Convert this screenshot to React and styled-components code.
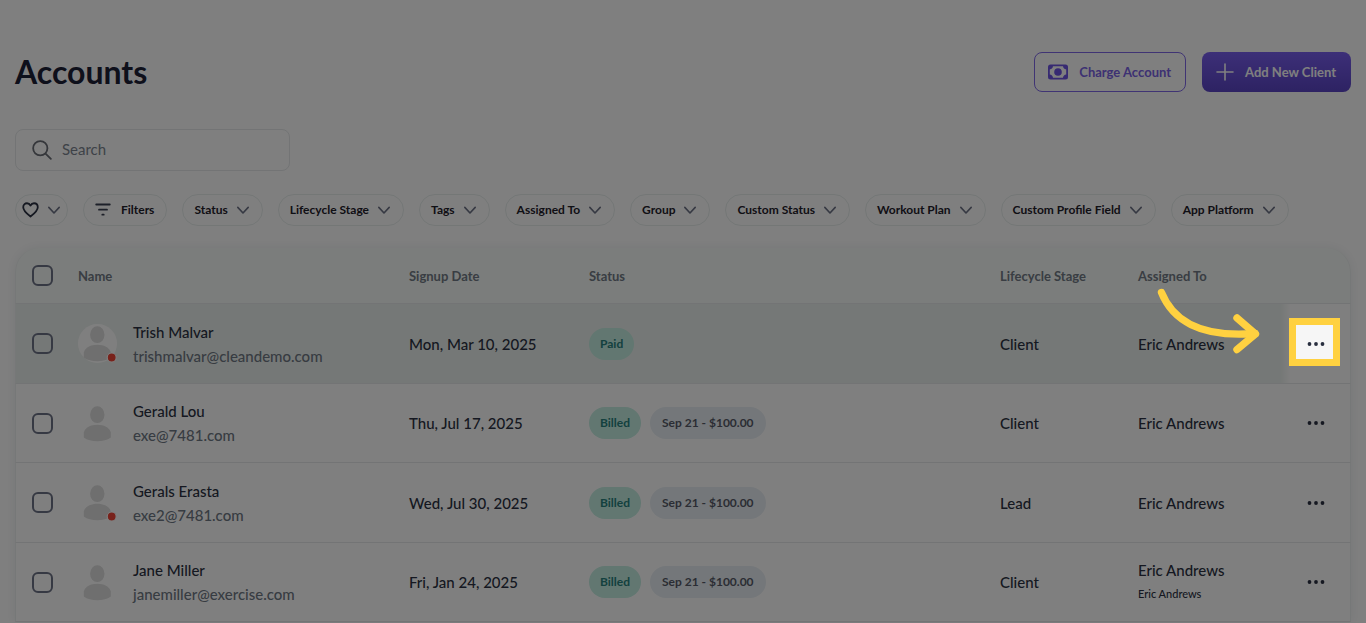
import React, { useState } from "react";
import styled, { createGlobalStyle, css } from "styled-components";

const GlobalStyle = createGlobalStyle`
  * {
    box-sizing: border-box;
  }
  body {
    margin: 0;
    background: #ffffff;
    color: #2b3142;
    font-family: Lato, "Liberation Sans", sans-serif;
    overflow: hidden;
  }
  button,
  input {
    font-family: inherit;
  }
`;

// --- STYLED COMPONENTS ---
const Page = styled.main`
  min-height: 100vh;
  padding: 52px 15px 0;
`;

const Header = styled.header`
  display: flex;
  align-items: center;
  justify-content: space-between;
  height: 40px;
`;

const Title = styled.h1`
  margin: 0;
  font-size: 32px;
  line-height: 40px;
  font-weight: 700;
  color: #1c2036;
`;

const HeaderActions = styled.div`
  display: flex;
  gap: 16px;
`;

const HeaderButton = styled.button`
  display: inline-flex;
  align-items: center;
  justify-content: center;
  gap: 10px;
  height: 40px;
  padding: 0 14px 0 12px;
  border: 1px solid #8069e8;
  border-radius: 8px;
  font-size: 13px;
  font-weight: 700;
  color: #7a62e6;
  background: transparent;
  cursor: pointer;
  ${({ $primary }) =>
    $primary &&
    css`
      border-color: transparent;
      color: #ffffff;
      background: linear-gradient(#7a5ff0, #5b45c6) border-box;
    `}
`;

const SearchBox = styled.label`
  display: flex;
  align-items: center;
  gap: 10px;
  width: 275px;
  height: 42px;
  margin-top: 37px;
  padding: 0 16px;
  border: 1px solid #e6e8ea;
  border-radius: 8px;
  color: #6b6e76;
`;

const SearchInput = styled.input`
  flex: 1;
  min-width: 0;
  padding: 0 0 2px;
  border: 0;
  outline: 0;
  background: transparent;
  font-size: 15px;
  color: #2b3142;
  &::placeholder {
    color: #7c8590;
    opacity: 1;
  }
`;

const FilterBar = styled.div`
  display: flex;
  gap: 15px;
  margin-top: 23px;
`;

const FilterPill = styled.button`
  display: inline-flex;
  align-items: center;
  gap: ${({ $gap }) => $gap || 8}px;
  height: 32px;
  padding: 0 ${({ $pad }) => $pad || 12}px 2px ${({ $pad }) => $pad || 11}px;
  border: 1px solid #e8eeed;
  border-radius: 16px;
  background: #ffffff;
  font-size: 12px;
  font-weight: 700;
  color: #1f212b;
  white-space: nowrap;
  cursor: pointer;
`;

const Card = styled.section`
  margin-top: 22px;
  border-radius: 24px 24px 0 0;
  box-shadow: 0 0 12px rgba(30, 50, 60, 0.08);
`;

const Table = styled.table`
  width: 100%;
  border-collapse: separate;
  border-spacing: 0;
  table-layout: fixed;
  th,
  td {
    padding: 0;
    text-align: left;
    border-bottom: 1px solid #e6e9eb;
  }
  th {
    height: 56px;
    background: #f6faf8;
    font-size: 13px;
    font-weight: 700;
    color: #737b86;
  }
  th:first-child {
    border-top-left-radius: 24px;
  }
  th:last-child {
    border-top-right-radius: 24px;
  }
  td {
    height: 80px;
    font-size: 15px;
    font-weight: 500;
  }
  tbody tr:nth-child(even) td {
    height: 79px;
  }
  th:first-child,
  td:first-child {
    padding-left: 16px;
    border-left: 1px solid #edf0f0;
  }
  th:last-child,
  td:last-child {
    border-right: 1px solid #edf0f0;
  }
`;

const Col = styled.col`
  width: ${({ $width }) => ($width ? `${$width}px` : "auto")};
`;

const Row = styled.tr`
  td {
    background: ${({ $active }) => ($active ? "#ebf1ee" : "#ffffff")};
  }
  td:last-child {
    background: ${({ $active }) =>
      $active ? "linear-gradient(90deg, #ebf1ee, #ffffff 10px)" : "#ffffff"};
  }
`;

const Checkbox = styled.input`
  display: block;
  appearance: none;
  width: 21px;
  height: 21px;
  margin: 0;
  border: 2px solid #6d7286;
  border-radius: 6px;
  cursor: pointer;
  &:checked {
    background: #6d7286;
  }
`;

const Person = styled.div`
  display: flex;
  align-items: center;
  gap: 16px;
`;

const Avatar = styled.svg`
  display: block;
  flex: none;
`;

const Name = styled.div`
  line-height: 24px;
`;

const Email = styled.div`
  line-height: 24px;
  color: #6f7884;
`;

const SubText = styled.div`
  font-size: 11px;
  line-height: 24px;
`;

const Badges = styled.div`
  display: flex;
  gap: 9px;
`;

const Badge = styled.span`
  height: 32px;
  padding: 0 ${({ $neutral }) => ($neutral ? 12 : 11)}px;
  border-radius: 16px;
  font-size: 12px;
  line-height: 31px;
  font-weight: 700;
  color: ${({ $neutral }) => ($neutral ? "#575b69" : "#28827e")};
  background: ${({ $neutral }) => ($neutral ? "#e9eff4" : "#c4eee2")};
`;

const MenuCell = styled.div`
  position: relative;
  display: flex;
  justify-content: center;
`;

const MenuButton = styled.button`
  display: flex;
  align-items: center;
  justify-content: center;
  width: 36px;
  height: 36px;
  padding: 0;
  border: 0;
  background: transparent;
  color: #2b3142;
  cursor: pointer;
`;

// Tour step: yellow frame, everything outside of it is dimmed
const Spotlight = styled.div`
  position: absolute;
  z-index: 10;
  top: -8px;
  left: 8px;
  width: 51px;
  height: 48px;
  border: 7px solid #ffd140;
  background: rgba(0, 0, 0, 0.035);
  box-shadow: 0 0 0 3000px rgba(0, 0, 0, 0.5);
  pointer-events: none;
`;

const Arrow = styled.svg`
  position: absolute;
  z-index: 11;
  top: -42px;
  right: 86px;
  pointer-events: none;
`;

// --- ICONS ---
const Chevron = () => (
  <svg width="14" height="14" viewBox="0 0 14 14" fill="none" stroke="#6d7286" strokeWidth="1.6" strokeLinecap="round" strokeLinejoin="round" aria-hidden="true">
    <path d="M1.8 5.4L7 11l5.2-5.6" />
  </svg>
);

const SearchIcon = () => (
  <svg width="20" height="20" viewBox="0 0 21 21" fill="none" stroke="currentColor" strokeWidth="1.9" strokeLinecap="round" aria-hidden="true">
    <circle cx="8.7" cy="8.7" r="7.5" />
    <path d="M14.2 14.2l5.6 5.6" />
  </svg>
);

const HeartIcon = () => (
  <svg width="17" height="17" viewBox="0 0 18 18" fill="none" stroke="#2b3142" strokeWidth="1.9" strokeLinejoin="round" aria-hidden="true">
    <path d="M9 16.5C5 13.5 1.3 10.3 1.3 6.7C1.3 4.1 3.1 2.4 5.3 2.4C7 2.4 8.3 3.4 9 4.8C9.7 3.4 11 2.4 12.7 2.4C14.9 2.4 16.7 4.1 16.7 6.7C16.7 10.3 13 13.5 9 16.5Z" />
  </svg>
);

const FilterIcon = () => (
  <svg width="16" height="14" viewBox="0 0 16 14" fill="none" stroke="#3b4152" strokeWidth="1.8" strokeLinecap="round" aria-hidden="true">
    <path d="M1.2 2.5h13.6M4 7.7h8M7.3 12.7h1.4" />
  </svg>
);

const CashIcon = () => (
  <svg width="22" height="22" viewBox="0 0 22 22" fill="#6e55e4" aria-hidden="true">
    <path
      fillRule="evenodd"
      d="M3.5 3.5H18.5A2.5 2.5 0 0 1 21 6V16A2.5 2.5 0 0 1 18.5 18.5H3.5A2.5 2.5 0 0 1 1 16V6A2.5 2.5 0 0 1 3.5 3.5ZM6 5.3C5.8 7 4.5 8.3 2.8 8.5V13.5C4.5 13.7 5.8 15 6 16.7H16C16.2 15 17.5 13.7 19.2 13.5V8.5C17.5 8.3 16.2 7 16 5.3Z"
    />
    <circle cx="11" cy="11" r="3.8" />
  </svg>
);

const PlusIcon = () => (
  <svg width="20" height="20" viewBox="0 0 20 20" fill="none" stroke="currentColor" strokeWidth="1.6" strokeLinecap="round" aria-hidden="true">
    <path d="M10 2v16M2 10h16" />
  </svg>
);

const DotsIcon = () => (
  <svg width="20" height="6" viewBox="0 0 20 6" fill="currentColor" aria-hidden="true">
    <circle cx="3.5" cy="3" r="1.9" />
    <circle cx="10" cy="3" r="1.9" />
    <circle cx="16.5" cy="3" r="1.9" />
  </svg>
);

const UserAvatar = ({ alert }) => (
  <Avatar width="39" height="39" viewBox="0 0 39 39" aria-hidden="true">
    <circle cx="19.5" cy="19.5" r="19.5" fill="#ffffff" />
    <ellipse cx="19.3" cy="10.7" rx="7.2" ry="8.4" fill="#dedede" />
    <path d="M5.8 28.5C7 23.5 13 20.8 19.3 20.8S31.6 23.5 32.8 28.5V33.5C29.5 36 24.5 37.3 19.3 37.3S9.1 36 5.8 33.5Z" fill="#dedede" />
    {alert && <circle cx="33.7" cy="33.5" r="4.5" fill="#f04436" stroke="#ffffff" strokeWidth="1.2" />}
  </Avatar>
);

// --- DATA ---
const filters = [
  "Status",
  "Lifecycle Stage",
  "Tags",
  "Assigned To",
  "Group",
  "Custom Status",
  "Workout Plan",
  "Custom Profile Field",
  "App Platform",
];

const accounts = [
  {
    id: 1,
    name: "Trish Malvar",
    email: "trishmalvar@cleandemo.com",
    signup: "Mon, Mar 10, 2025",
    status: "Paid",
    stage: "Client",
    assigned: "Eric Andrews",
    alert: true,
    active: true,
  },
  {
    id: 2,
    name: "Gerald Lou",
    email: "exe@7481.com",
    signup: "Thu, Jul 17, 2025",
    status: "Billed",
    due: "Sep 21 - $100.00",
    stage: "Client",
    assigned: "Eric Andrews",
  },
  {
    id: 3,
    name: "Gerals Erasta",
    email: "exe2@7481.com",
    signup: "Wed, Jul 30, 2025",
    status: "Billed",
    due: "Sep 21 - $100.00",
    stage: "Lead",
    assigned: "Eric Andrews",
    alert: true,
  },
  {
    id: 4,
    name: "Jane Miller",
    email: "janemiller@exercise.com",
    signup: "Fri, Jan 24, 2025",
    status: "Billed",
    due: "Sep 21 - $100.00",
    stage: "Client",
    assigned: "Eric Andrews",
    assignedSub: "Eric Andrews",
  },
];

const App = () => {
  const [search, setSearch] = useState("");
  const [selected, setSelected] = useState([]);

  const toggleAll = () => {
    setSelected(
      selected.length === accounts.length ? [] : accounts.map((a) => a.id)
    );
  };

  const toggle = (id) => {
    setSelected((current) =>
      current.includes(id) ? current.filter((x) => x !== id) : [...current, id]
    );
  };

  return (
    <>
      <GlobalStyle />
      <Page>
        <Header>
          <Title>Accounts</Title>
          <HeaderActions>
            <HeaderButton type="button">
              <CashIcon />
              Charge Account
            </HeaderButton>
            <HeaderButton type="button" $primary>
              <PlusIcon />
              Add New Client
            </HeaderButton>
          </HeaderActions>
        </Header>

        <SearchBox>
          <SearchIcon />
          <SearchInput
            type="text"
            placeholder="Search"
            aria-label="Search"
            value={search}
            onChange={(e) => setSearch(e.target.value)}
          />
        </SearchBox>

        <FilterBar>
          <FilterPill type="button" aria-label="Favorites" $pad={6}>
            <HeartIcon />
            <Chevron />
          </FilterPill>
          <FilterPill type="button" $gap={10}>
            <FilterIcon />
            Filters
          </FilterPill>
          {filters.map((label) => (
            <FilterPill key={label} type="button" aria-haspopup="listbox">
              {label}
              <Chevron />
            </FilterPill>
          ))}
        </FilterBar>

        <Card>
          <Table>
            <colgroup>
              <Col $width={63} />
              <Col $width={331} />
              <Col $width={180} />
              <Col />
              <Col $width={138} />
              <Col $width={143} />
              <Col $width={70} />
            </colgroup>
            <thead>
              <tr>
                <th>
                  <Checkbox
                    type="checkbox"
                    aria-label="Select all"
                    checked={selected.length === accounts.length}
                    onChange={toggleAll}
                  />
                </th>
                <th>Name</th>
                <th>Signup Date</th>
                <th>Status</th>
                <th>Lifecycle Stage</th>
                <th>Assigned To</th>
                <th aria-label="Actions" />
              </tr>
            </thead>
            <tbody>
              {accounts.map((account) => (
                <Row key={account.id} $active={account.active}>
                  <td>
                    <Checkbox
                      type="checkbox"
                      aria-label={`Select ${account.name}`}
                      checked={selected.includes(account.id)}
                      onChange={() => toggle(account.id)}
                    />
                  </td>
                  <td>
                    <Person>
                      <UserAvatar alert={account.alert} />
                      <div>
                        <Name>{account.name}</Name>
                        <Email>{account.email}</Email>
                      </div>
                    </Person>
                  </td>
                  <td>{account.signup}</td>
                  <td>
                    <Badges>
                      <Badge>{account.status}</Badge>
                      {account.due && <Badge $neutral>{account.due}</Badge>}
                    </Badges>
                  </td>
                  <td>{account.stage}</td>
                  <td>
                    <Name>{account.assigned}</Name>
                    {account.assignedSub && (
                      <SubText>{account.assignedSub}</SubText>
                    )}
                  </td>
                  <td>
                    <MenuCell>
                      <MenuButton
                        type="button"
                        aria-label={`Actions for ${account.name}`}
                      >
                        <DotsIcon />
                      </MenuButton>
                      {account.active && (
                        <>
                          <Spotlight />
                          <Arrow width="112" height="76" viewBox="0 0 112 76" fill="none" stroke="#ffd140" strokeWidth="7.4" strokeLinecap="round" aria-hidden="true">
                            <path d="M9.5 8.5C20 35 47 54 103 49.5" />
                            <path d="M85 34L103.5 50L85 65.5" strokeLinejoin="round" />
                          </Arrow>
                        </>
                      )}
                    </MenuCell>
                  </td>
                </Row>
              ))}
            </tbody>
          </Table>
        </Card>
      </Page>
    </>
  );
};

export default App;
